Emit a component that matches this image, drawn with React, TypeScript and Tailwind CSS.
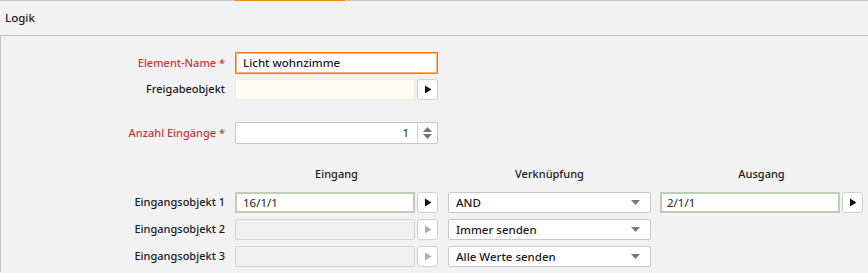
import React from "react";

const font = { fontFamily: '"Noto Sans", "Open Sans", sans-serif' };

function Arrow({ disabled }: { disabled?: boolean }) {
  return (
    <div className="flex h-full w-[21px] items-center justify-center rounded-[3px] border border-[#cfcfcf] bg-white">
      <svg width="8" height="9" viewBox="0 0 8 9">
        <path d="M1 0.5 L7.5 4.5 L1 8.5 Z" fill={disabled ? "#b0b0b0" : "#111"} />
      </svg>
    </div>
  );
}

function Caret() {
  return (
    <svg width="9" height="5" viewBox="0 0 9 5">
      <path d="M0 0 L9 0 L4.5 5 Z" fill="#777" />
    </svg>
  );
}

function Select({ text }: { text: string }) {
  return (
    <div className="flex h-[21px] w-[203px] items-center justify-between rounded-[2px] border border-[#c8c8c8] bg-white pl-[7px] pr-[10px] text-[11.5px] font-medium text-[#1a1a1a]">
      <span>{text}</span>
      <Caret />
    </div>
  );
}

function Label({ children, red }: { children: React.ReactNode; red?: boolean }) {
  return (
    <div
      className={`w-[235px] shrink-0 pr-[10px] text-right text-[11px] font-medium ${
        red ? "text-[#c23a3a]" : "text-[#1a1a1a]"
      }`}
    >
      {children}
    </div>
  );
}

function ObjRow({ n, value, disabled, select, out }: { n: number; value?: string; disabled?: boolean; select: string; out?: string }) {
  return (
    <div className="flex h-[21px] items-center">
      <Label>Eingangsobjekt {n}</Label>
      <div className="flex h-full w-[203px] gap-[2px]">
        {disabled ? (
          <div className="h-full w-[180px] rounded-[2px] border border-[#d4d4d4] bg-[#f0f0f0]" />
        ) : (
          <div className="flex h-full w-[180px] items-center border-2 border-[#bcd1b4] bg-white pl-[6px] text-[11.5px] text-[#1a1a1a]">
            {value}
          </div>
        )}
        <Arrow disabled={disabled} />
      </div>
      <div className="ml-[10px]">
        <Select text={select} />
      </div>
      {out !== undefined && (
        <div className="ml-[9px] flex h-full w-[203px] gap-[2px]">
          <div className="flex h-full w-[182px] items-center border-2 border-[#bcd1b4] bg-white pl-[5px] text-[11.5px] text-[#1a1a1a]">
            {out}
          </div>
          <Arrow />
        </div>
      )}
    </div>
  );
}

export default function App() {
  return (
    <div className="h-[273px] w-[868px] overflow-hidden bg-[#f2f2f2]" style={font}>
      <div className="flex h-px bg-[#c4c4c4]">
        <div className="ml-[234px] h-px w-[111px] bg-[#f28a1c]" />
      </div>
      <div className="flex h-[35px] items-center border-b border-[#c4c4c4] pl-[5px] text-[11.5px] font-medium text-[#1a1a1a]">
        Logik
      </div>
      <div className="h-[236px] border-l border-[#c4c4c4] pt-[16px]">
        <div className="-ml-px flex h-[22px] items-center">
          <Label red>Element-Name *</Label>
          <div className="flex h-full w-[203px] items-center border border-[#ee7f16] bg-white pl-[7px] text-[11.5px] font-medium text-[#1a1a1a] shadow-[inset_0_0_0_1px_#f7b36f]">
            Licht wohnzimme
          </div>
        </div>
        <div className="-ml-px mt-[5px] flex h-[21px] items-center">
          <Label>Freigabeobjekt</Label>
          <div className="flex h-full w-[203px] gap-[2px]">
            <div className="h-full w-[180px] border border-[#efeedd] bg-[#fffdf2]" />
            <Arrow />
          </div>
        </div>
        <div className="-ml-px mt-[22px] flex h-[22px] items-center">
          <Label red>Anzahl Eingänge *</Label>
          <div className="flex h-full w-[203px] rounded-[2px] border border-[#c8c8c8] bg-white">
            <div className="flex flex-1 items-center justify-end pr-[8px] text-[11.5px] text-[#1a1a1a]">1</div>
            <div className="flex w-[20px] flex-col items-center justify-center gap-[2px] border-l border-[#d4d4d4]">
              <svg width="9" height="5" viewBox="0 0 9 5"><path d="M0 5 L9 5 L4.5 0 Z" fill="#777" /></svg>
              <svg width="9" height="5" viewBox="0 0 9 5"><path d="M0 0 L9 0 L4.5 5 Z" fill="#777" /></svg>
            </div>
          </div>
        </div>
        <div className="-ml-px mt-[20px] flex h-[20px] items-center text-[11px] font-medium text-[#1a1a1a]">
          <div className="w-[235px] shrink-0" />
          <div className="w-[203px] text-center">Eingang</div>
          <div className="ml-[10px] w-[203px] text-center">Verknüpfung</div>
          <div className="ml-[9px] w-[203px] text-center">Ausgang</div>
        </div>
        <div className="-ml-px mt-[8px] flex flex-col gap-[6px]">
          <ObjRow n={1} value="16/1/1" select="AND" out="2/1/1" />
          <ObjRow n={2} disabled select="Immer senden" />
          <ObjRow n={3} disabled select="Alle Werte senden" />
        </div>
      </div>
    </div>
  );
}
